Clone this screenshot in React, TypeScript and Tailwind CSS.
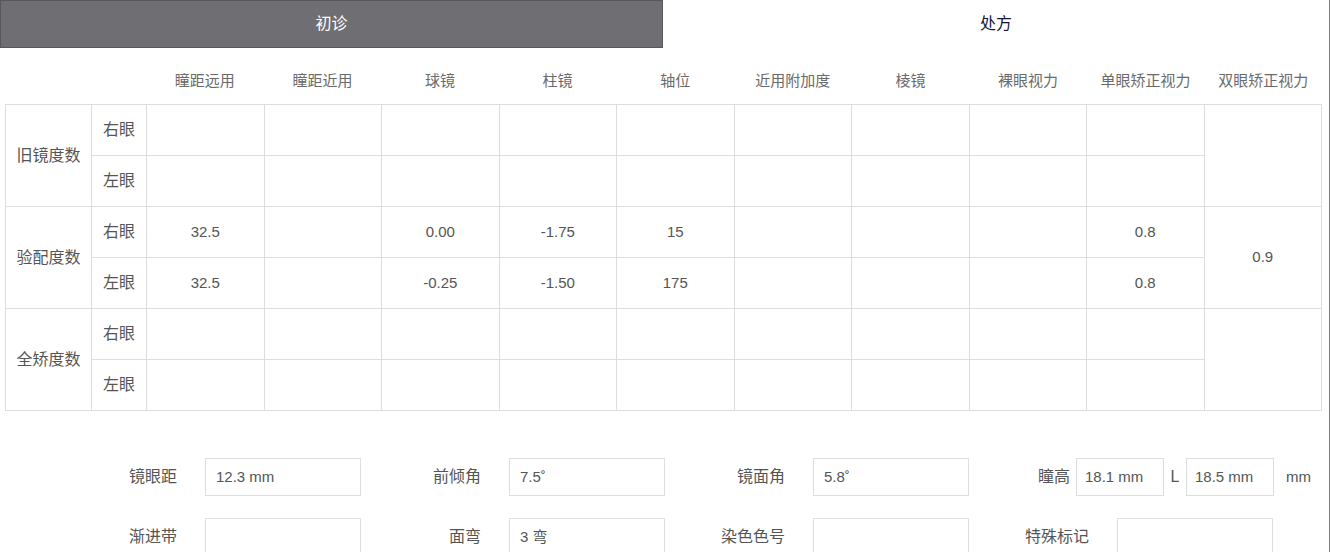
const cols = ['瞳距远用', '瞳距近用', '球镜', '柱镜', '轴位', '近用附加度', '棱镜', '裸眼视力', '单眼矫正视力', '双眼矫正视力']

type Row = { group: string; eye: string; vals: string[] }

// 9 data columns per row; the 10th (双眼矫正视力) is merged per group
const rows: Row[] = [
  { group: '旧镜度数', eye: '右眼', vals: ['', '', '', '', '', '', '', '', ''] },
  { group: '旧镜度数', eye: '左眼', vals: ['', '', '', '', '', '', '', '', ''] },
  { group: '验配度数', eye: '右眼', vals: ['32.5', '', '0.00', '-1.75', '15', '', '', '', '0.8'] },
  { group: '验配度数', eye: '左眼', vals: ['32.5', '', '-0.25', '-1.50', '175', '', '', '', '0.8'] },
  { group: '全矫度数', eye: '右眼', vals: ['', '', '', '', '', '', '', '', ''] },
  { group: '全矫度数', eye: '左眼', vals: ['', '', '', '', '', '', '', '', ''] },
]

const binocular: Record<string, string> = { 旧镜度数: '', 验配度数: '0.9', 全矫度数: '' }

const cell = 'border border-[#dedede] text-center align-middle'

function Field({ label, value }: { label: string; value?: string }) {
  return (
    <div className="w-[304px] flex items-center shrink-0">
      <span className="w-[90px] text-right text-[16px] text-[#555]">{label}</span>
      <div className="ml-[28px] h-[38px] w-[156px] border border-[#dedede] flex items-center px-[10px] text-[15px] text-[#555]">
        {value}
      </div>
    </div>
  )
}

export default function App() {
  return (
    <div
      className="w-[1330px] h-[552px] overflow-hidden bg-white border-r border-[#7a7a7a] flex flex-col"
      style={{ fontFamily: '"Liberation Sans", "Noto Sans CJK SC", sans-serif' }}
    >
      {/* Tabs */}
      <div className="flex h-[48px] shrink-0">
        <div className="w-[663px] bg-[#6f6e73] border border-[#58575c] flex items-center justify-center text-white text-[16px]">
          初诊
        </div>
        <div className="flex-1 flex items-center justify-center text-[#15143a] text-[16px]">处方</div>
      </div>

      {/* Column headers */}
      <div className="h-[56px] shrink-0 ml-[5px] w-[1317px] grid grid-cols-[86px_55px_repeat(10,1fr)] items-center pt-[10px]">
        <div />
        <div />
        {cols.map(c => (
          <div key={c} className="text-center text-[15px] text-[#6a6a6a]">{c}</div>
        ))}
      </div>

      {/* Table */}
      <div className="ml-[5px]">
        <table className="w-[1317px] table-fixed border-collapse text-[15px] text-[#555]">
          <colgroup>
            <col className="w-[86px]" />
            <col className="w-[55px]" />
            {cols.map(c => <col key={c} />)}
          </colgroup>
          <tbody>
            {rows.map((r, i) => (
              <tr key={i} className="h-[51px]">
                {i % 2 === 0 && (
                  <td rowSpan={2} className={`${cell} text-[16px]`}>{r.group}</td>
                )}
                <td className={`${cell} text-[16px]`}>{r.eye}</td>
                {r.vals.map((v, j) => (
                  <td key={j} className={cell}>{v}</td>
                ))}
                {i % 2 === 0 && (
                  <td rowSpan={2} className={cell}>{binocular[r.group]}</td>
                )}
              </tr>
            ))}
          </tbody>
        </table>
      </div>

      {/* Fitting parameters */}
      <div className="mt-[47px] pl-[87px] flex flex-col gap-[22px]">
        <div className="flex">
          <Field label="镜眼距" value="12.3 mm" />
          <Field label="前倾角" value="7.5˚" />
          <Field label="镜面角" value="5.8˚" />
          <div className="flex items-center text-[#555]">
            <span className="w-[71px] text-right text-[16px]">瞳高</span>
            <div className="ml-[6px] h-[38px] w-[88px] border border-[#dedede] flex items-center px-[8px] text-[15px]">18.1 mm</div>
            <span className="w-[22px] text-center text-[16px]">L</span>
            <div className="h-[38px] w-[88px] border border-[#dedede] flex items-center px-[8px] text-[15px]">18.5 mm</div>
            <span className="ml-[12px] text-[15px]">mm</span>
          </div>
        </div>
        <div className="flex">
          <Field label="渐进带" />
          <Field label="面弯" value="3 弯" />
          <Field label="染色色号" />
          <Field label="特殊标记" />
        </div>
      </div>
    </div>
  )
}
